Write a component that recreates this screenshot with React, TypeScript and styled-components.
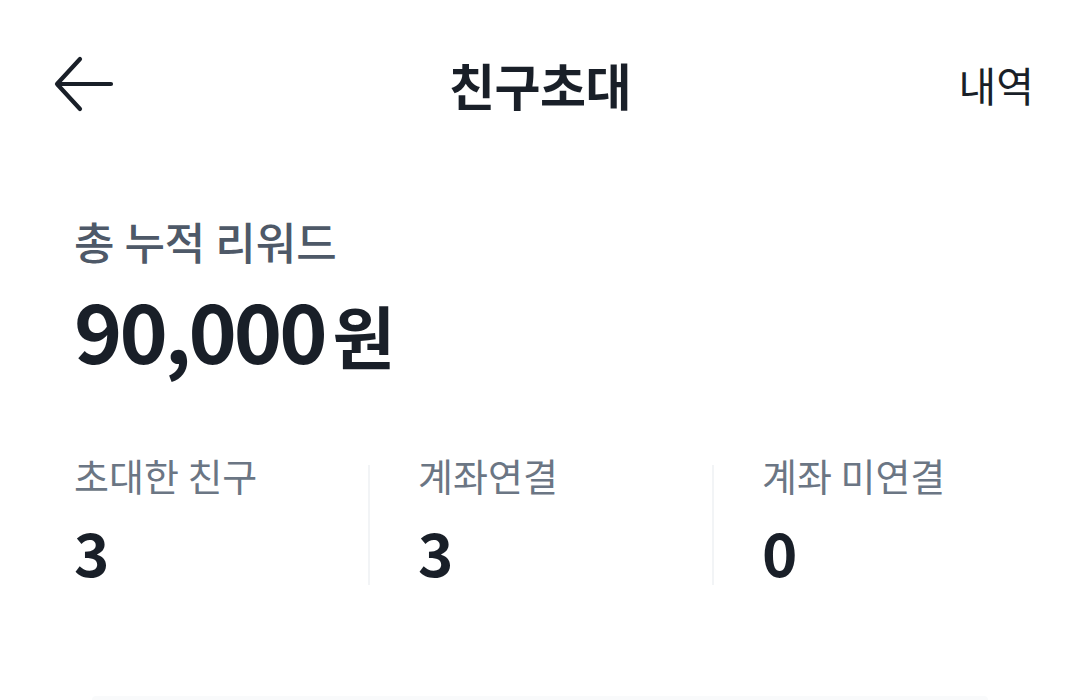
import React from "react";
import styled, { createGlobalStyle } from "styled-components";

const GlobalStyle = createGlobalStyle`
  html, body { margin: 0; padding: 0; background: #ffffff; }
  body { font-family: "Noto Sans CJK KR", "Noto Sans", sans-serif; color: #191f28; }
  * { box-sizing: border-box; }
`;

const Page = styled.div`
  width: 1080px;
  height: 700px;
  overflow: hidden;
  background: #ffffff;
  display: flex;
  flex-direction: column;
`;

const Header = styled.header`
  height: 168px;
  padding: 0 46px 0 52px;
  display: flex;
  align-items: center;
  justify-content: space-between;
  position: relative;
`;

const BackButton = styled.button`
  width: 66px;
  height: 60px;
  border: 0;
  background: transparent;
  padding: 0;
  display: flex;
  align-items: center;
  cursor: pointer;
`;

const Title = styled.h1`
  position: absolute;
  left: 50%;
  transform: translateX(-50%);
  margin: 0;
  font-size: 50px;
  font-weight: 600;
  letter-spacing: -0.5px;
  color: #191f28;
`;

const HistoryLink = styled.span`
  font-size: 41px;
  font-weight: 400;
  color: #191f28;
`;

const Summary = styled.section`
  padding: 46px 74px 0;
  display: flex;
  flex-direction: column;
`;

const SummaryLabel = styled.div`
  font-size: 44px;
  font-weight: 500;
  line-height: 54px;
  color: #4e5968;
`;

const Amount = styled.div`
  display: flex;
  align-items: baseline;
  margin-top: 16px;
  line-height: 90px;
  color: #191f28;
`;

const AmountValue = styled.span`
  font-size: 82px;
  font-weight: 700;
  letter-spacing: -3px;
`;

const AmountUnit = styled.span`
  font-size: 68px;
  font-weight: 600;
  margin-left: 8px;
`;

const Stats = styled.div`
  display: grid;
  grid-template-columns: 294px 344px 1fr;
  margin-top: 70px;
  padding-left: 74px;
`;

const StatCell = styled.div`
  display: flex;
`;

const Divider = styled.div`
  width: 2px;
  height: 120px;
  margin: 15px 48px 0 0;
  background: #f2f4f6;
`;

const Stat = styled.div`
  display: flex;
  flex-direction: column;
`;

const StatLabel = styled.div`
  font-size: 38px;
  line-height: 50px;
  font-weight: 400;
  color: #6b7684;
`;

const StatValue = styled.div`
  font-size: 60px;
  line-height: 72px;
  font-weight: 600;
  margin-top: 15px;
  color: #191f28;
`;

const BottomCard = styled.div`
  margin: auto 92px 0;
  height: 4px;
  border-radius: 14px 14px 0 0;
  background: #f9fafb;
`;

const ArrowIcon = () => (
  <svg width="62" height="56" viewBox="0 0 62 56" fill="none">
    <path
      d="M59 28H5M28 3L5 28L28 53"
      stroke="#191f28"
      strokeWidth="4.2"
      strokeLinecap="round"
      strokeLinejoin="round"
    />
  </svg>
);

const stats = [
  { label: "초대한 친구", value: "3" },
  { label: "계좌연결", value: "3" },
  { label: "계좌 미연결", value: "0" },
];

export default function App() {
  return (
    <Page>
      <GlobalStyle />
      <Header>
        <BackButton aria-label="뒤로">
          <ArrowIcon />
        </BackButton>
        <Title>친구초대</Title>
        <HistoryLink>내역</HistoryLink>
      </Header>
      <Summary>
        <SummaryLabel>총 누적 리워드</SummaryLabel>
        <Amount>
          <AmountValue>90,000</AmountValue>
          <AmountUnit>원</AmountUnit>
        </Amount>
      </Summary>
      <Stats>
        {stats.map((s, i) => (
          <StatCell key={s.label}>
            {i > 0 && <Divider />}
            <Stat>
              <StatLabel>{s.label}</StatLabel>
              <StatValue>{s.value}</StatValue>
            </Stat>
          </StatCell>
        ))}
      </Stats>
      <BottomCard />
    </Page>
  );
}
